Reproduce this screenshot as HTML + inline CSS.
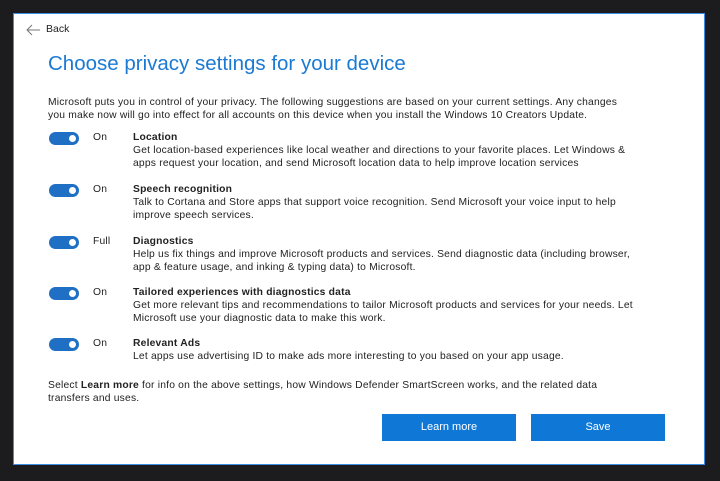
<!DOCTYPE html><html><head><style>
body{margin:0;width:720px;height:481px;background:#1c1c1e;position:relative;overflow:hidden;font-family:"Liberation Sans",sans-serif;color:#222}
#p{position:absolute;left:13px;top:13px;width:692px;height:452px;background:#fff;border:1px solid #3a8ee6;box-sizing:border-box}
.a{position:absolute;white-space:nowrap}
.t{font-size:10.3px;line-height:13px;letter-spacing:0.2px}
.tg{position:absolute;left:35px;width:30px;height:13px;border-radius:7px;background:#1f6fc4}
.tg:after{content:"";position:absolute;right:3px;top:3px;width:7px;height:7px;border-radius:50%;background:#fff}
.b{position:absolute;top:400px;width:134px;height:27px;background:#0f78d7;color:#fff;font-size:11px;text-align:center;line-height:27px}
</style></head><body><div id="p">
<svg class="a" style="left:11px;top:10px" width="16" height="12"><path d="M15 6H2M7 1L2 6l5 5" fill="none" stroke="#777" stroke-width="1"/></svg>
<div class="a" style="left:32px;top:9px;font-size:10.5px">Back</div>
<div class="a" style="left:34px;top:38px;font-size:20.5px;color:#1b7ad3">Choose privacy settings for your device</div>
<div class="a t" style="left:34px;top:82px">Microsoft puts you in control of your privacy. The following suggestions are based on your current settings. Any changes<br>you make now will go into effect for all accounts on this device when you install the Windows 10 Creators Update.</div>

<div class="tg" style="top:118px"></div><div class="a t" style="left:79px;top:117px">On</div>
<div class="a t" style="left:119px;top:117px"><b>Location</b><br>Get location-based experiences like local weather and directions to your favorite places. Let Windows &amp;<br>apps request your location, and send Microsoft location data to help improve location services</div>

<div class="tg" style="top:170px"></div><div class="a t" style="left:79px;top:169px">On</div>
<div class="a t" style="left:119px;top:169px"><b>Speech recognition</b><br>Talk to Cortana and Store apps that support voice recognition. Send Microsoft your voice input to help<br>improve speech services.</div>

<div class="tg" style="top:222px"></div><div class="a t" style="left:79px;top:221px">Full</div>
<div class="a t" style="left:119px;top:221px"><b>Diagnostics</b><br>Help us fix things and improve Microsoft products and services. Send diagnostic data (including browser,<br>app &amp; feature usage, and inking &amp; typing data) to Microsoft.</div>

<div class="tg" style="top:273px"></div><div class="a t" style="left:79px;top:272px">On</div>
<div class="a t" style="left:119px;top:272px"><b>Tailored experiences with diagnostics data</b><br>Get more relevant tips and recommendations to tailor Microsoft products and services for your needs. Let<br>Microsoft use your diagnostic data to make this work.</div>

<div class="tg" style="top:324px"></div><div class="a t" style="left:79px;top:323px">On</div>
<div class="a t" style="left:119px;top:323px"><b>Relevant Ads</b><br>Let apps use advertising ID to make ads more interesting to you based on your app usage.</div>

<div class="a t" style="left:34px;top:365px">Select <b>Learn more</b> for info on the above settings, how Windows Defender SmartScreen works, and the related data<br>transfers and uses.</div>
<div class="b" style="left:368px">Learn more</div>
<div class="b" style="left:517px">Save</div>
</div></body></html>
